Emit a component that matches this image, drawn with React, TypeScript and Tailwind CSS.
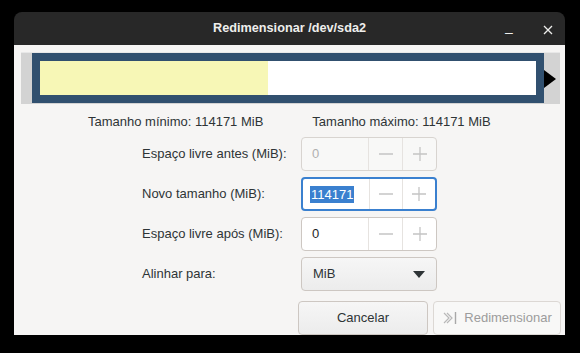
import React from 'react';

const font = { fontFamily: '"Liberation Sans", Arial, sans-serif' };

const Minus = ({ c = '#c4c4c4' }: { c?: string }) => (
  <svg width="16" height="16" viewBox="0 0 16 16"><path d="M1 8h14" stroke={c} strokeWidth="1.3" /></svg>
);
const Plus = ({ c = '#c4c4c4' }: { c?: string }) => (
  <svg width="16" height="16" viewBox="0 0 16 16"><path d="M1 8h14M8 1v14" stroke={c} strokeWidth="1.3" /></svg>
);

interface SpinProps {
  value: string;
  disabled?: boolean;
  focused?: boolean;
}

const Spin: React.FC<SpinProps> = ({ value, disabled, focused }) => {
  const border = focused ? 'border-2 border-[#3a80cf]' : disabled ? 'border border-[#d8d4d0]' : 'border border-[#cdc7c2]';
  return (
    <div className={`flex h-[34px] w-[136px] rounded-[4px] ${border} ${disabled ? 'bg-[#f8f8f7]' : 'bg-white'} overflow-hidden`}>
      <div className={`flex w-[66px] items-center ${focused ? 'pl-[7px]' : 'pl-[10px]'} text-[13px]`}>
        {focused ? (
          <span className="bg-[#3a80cf] px-[1px] leading-[17px] text-white">{value}</span>
        ) : (
          <span className={disabled ? 'text-[#b0b0b0]' : 'text-[#1e1e1e]'}>{value}</span>
        )}
      </div>
      <div className="flex flex-1 items-center justify-center border-l border-[#e6e3e0]"><Minus /></div>
      <div className="flex flex-1 items-center justify-center border-l border-[#e6e3e0]"><Plus /></div>
    </div>
  );
};

const Row = ({ label, children }: { label: string; children: React.ReactNode }) => (
  <div className="flex items-center">
    <div className="w-[159px] text-[13px] text-[#2e3436]">{label}</div>
    {children}
  </div>
);

export default function App() {
  return (
    <div className="h-[353px] w-[580px] bg-black pl-[14px] pt-[12px]" style={font}>
      <div className="flex h-[323px] w-[551px] flex-col overflow-hidden rounded-t-[8px]">
        <div className="relative flex h-[36px] items-center justify-center bg-[#282828]">
          <span className="text-[12.7px] font-bold text-[#eeeeec]">Redimensionar /dev/sda2</span>
          <span className="absolute left-[491px] top-[10px] text-[14px] text-[#eeeeec]">–</span>
          <svg className="absolute left-[529px] top-[13px]" width="10" height="10" viewBox="0 0 10 10">
            <path d="M1 1l8 8M9 1l-8 8" stroke="#eeeeec" strokeWidth="1.3" />
          </svg>
        </div>
        <div className="flex flex-1 flex-col bg-[#f6f5f4] px-[7px] pt-[7px]">
          <div className="relative h-[52px] w-[539px] border-t border-[#e8e8e8] bg-[#d3d3d3]">
            <div className="ml-[11px] flex h-[50px] w-[512px] border-[8px] border-[#31506f]">
              <div className="h-full w-[228px] bg-[#f7f7b6]" />
              <div className="h-full flex-1 bg-white" />
            </div>
            <svg className="absolute left-[523px] top-[17px]" width="12" height="18" viewBox="0 0 12 18">
              <path d="M0 0L12 9L0 18Z" fill="#000" />
            </svg>
          </div>
          <div className="mt-[8px] flex text-[13px] text-[#2e3436]">
            <span className="ml-[67px]">Tamanho mínimo: 114171 MiB</span>
            <span className="ml-[49px]">Tamanho máximo: 114171 MiB</span>
          </div>
          <div className="ml-[121px] mt-[6px] flex flex-col gap-[6px]">
            <Row label="Espaço livre antes (MiB):"><Spin value="0" disabled /></Row>
            <Row label="Novo tamanho (MiB):"><Spin value="114171" focused /></Row>
            <Row label="Espaço livre após (MiB):"><Spin value="0" /></Row>
            <Row label="Alinhar para:">
              <div className="flex h-[34px] w-[136px] items-center justify-between rounded-[4px] border border-[#cdc7c2] bg-gradient-to-b from-[#f6f6f6] to-[#ececec] pl-[11px] pr-[11px] text-[13px] text-[#2e3436]">
                <span>MiB</span>
                <svg width="12" height="7" viewBox="0 0 12 7"><path d="M0 0h12L6 7Z" fill="#2e3436" /></svg>
              </div>
            </Row>
          </div>
          <div className="-mr-[3px] mt-[10px] flex justify-end gap-[5px]">
            <button className="h-[34px] w-[130px] rounded-[4px] border border-[#cdc7c2] bg-gradient-to-b from-[#f6f6f6] to-[#ececec] text-[13px] text-[#2e3436]">Cancelar</button>
            <button className="flex h-[34px] w-[128px] items-center justify-center gap-[4px] rounded-[4px] border border-[#dcd8d4] bg-[#f8f8f7] text-[13px] text-[#9c9c9c]">
              <svg width="18" height="16" viewBox="0 0 18 16">
                <path d="M2 3l5 5-5 5M5 3l5 5-5 5" fill="none" stroke="#b8b8b8" strokeWidth="1.2" />
                <path d="M13.5 2v12" stroke="#a8a8a8" strokeWidth="1.4" />
              </svg>
              <span>Redimensionar</span>
            </button>
          </div>
        </div>
      </div>
    </div>
  );
}
